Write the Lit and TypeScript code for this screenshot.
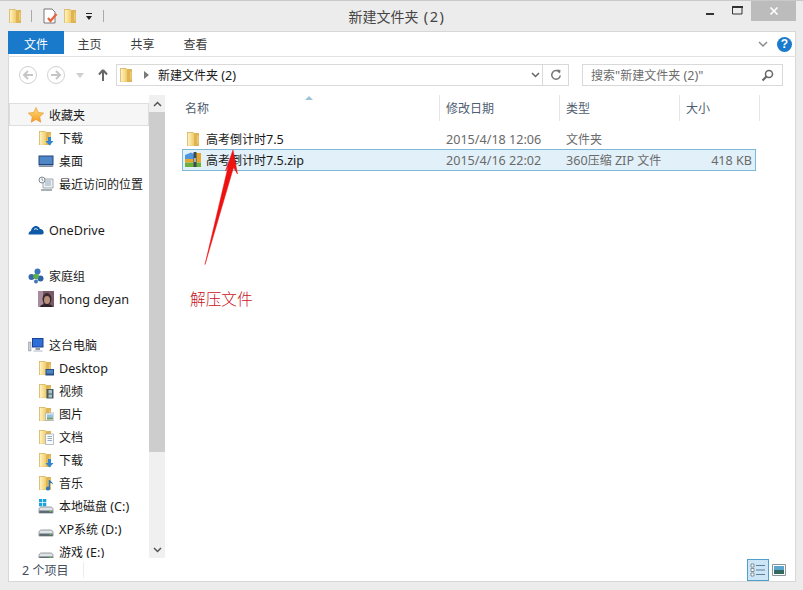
import { LitElement, html, css, svg } from "lit";
import { customElement } from "lit/decorators.js";

const t = (s: string) =>
  s.split(/([\u0020-\u007e]+)/).filter(Boolean).map((p) =>
    /^[\u0020-\u007e]+$/.test(p) ? html`<span class="l">${p}</span>` : p
  );

const folderBase = svg`
  <defs><linearGradient id="fg" x1="0" y1="0" x2="1" y2="0"><stop offset="0" stop-color="#fff3c4"/><stop offset="1" stop-color="#efcb68"/></linearGradient></defs>
  <path d="M1 1h6l1 1h5v13H1z" fill="#d8b565"/>
  <path d="M1.800 1.800h6.400v13H1.800z" fill="url(#fg)"/>
  <path d="M8.200 3l4.300-.5v11.700l-4.300.9z" fill="#e0b450"/>
  <path d="M11 4.500h1.500v8H11z" fill="#eccb78"/>`;

const overlays: Record<string, unknown> = {
  plain: svg``,
  down: svg`<path d="M10 7h3v4h2.500l-4 4.500-4-4.500H10z" fill="#2f86cf"/>`,
  desktop: svg`<path d="M7.500 9h8.500v6.500H7.500z" fill="#2b4f86"/><path d="M8.500 10h6.500v3.500H8.500z" fill="#4d86c4"/>`,
  video: svg`<path d="M8.500 6h7v9.500h-7z" fill="#4a5a60"/><path d="M10.500 7h3.500v3.500h-3.500zM10.500 11.500h3.500v3h-3.500z" fill="#a8c4c8"/>`,
  picture: svg`<path d="M7.500 7h8.500v7.500H7.500z" fill="#f2f4f6" stroke="#9aa3ad" stroke-width=".6"/><path d="M9 8.500h6v3H9z" fill="#8fc1e0"/><path d="M9 11.500h6v2H9z" fill="#6f9a6a"/>`,
  doc: svg`<path d="M7.500 5h8v10.500h-8z" fill="#fafbfc" stroke="#9aa3ad" stroke-width=".7"/><path d="M9.500 7.500h4.500M9.500 9.500h4.500M9.500 11.500h4.500" stroke="#7d98b5" stroke-width=".8"/>`,
  music: svg`<path d="M12 5v8.500a2 2 0 1 1-1.200-1.800V5z" fill="#2f77b8"/><path d="M12 5c1 2 3 2 3 4.500-1-1.300-2-1.500-3-1.500z" fill="#2f77b8"/>`,
};

const folder = (k: string) =>
  html`<svg class="ic" viewBox="0 0 16 16">${folderBase}${overlays[k]}</svg>`;

const star = html`<svg class="ic" viewBox="0 0 16 16"><defs><linearGradient id="st" x1="0" y1="0" x2="0" y2="1"><stop offset="0" stop-color="#ffe07a"/><stop offset="1" stop-color="#f59a23"/></linearGradient></defs><path d="M8 .5l2.300 5 5.400.6-4 3.700 1.100 5.400L8 12.500l-4.800 2.700 1.100-5.400-4-3.700 5.400-.6z" fill="url(#st)" stroke="#e0902a" stroke-width=".6"/></svg>`;
const desk = html`<svg class="ic" viewBox="0 0 16 16"><path d="M.5 2.500h15v10H.5z" fill="#24457c"/><path d="M1.500 3.500h13v7.500h-13z" fill="#4f86c6"/><path d="M1 13h14v1H1z" fill="#8794a3"/></svg>`;
const recent = html`<svg class="ic" viewBox="0 0 16 16"><path d="M5 3h10v9H5z" fill="#eef1f3" stroke="#8c969e" stroke-width=".8"/><path d="M7 5h6M7 7h6M7 9h6" stroke="#8aa3b8" stroke-width=".9"/><path d="M3 13h11v2H3z" fill="#a9b0b6"/><circle cx="4" cy="4" r="3" fill="#f7f7f7" stroke="#7f8a92"/><path d="M4 2.300V4l1.200.8" stroke="#5f6a72" stroke-width=".7" fill="none"/></svg>`;
const cloud = html`<svg class="ic" viewBox="0 0 16 16"><path d="M.5 12.500C.5 10 2 9 3 9c.3-3 3-5.500 5.500-5 2 .3 3 1.500 3.500 3 2.300 0 3.700 1.800 3.700 3.300 0 1.400-.8 2.200-2 2.200z" fill="#0f5aa8"/><path d="M6 7.500c1.500-1.300 3-.8 4 .5" stroke="#fff" stroke-width=".9" fill="none"/></svg>`;
const home = html`<svg class="ic" viewBox="0 0 16 16"><path d="M4 9L9 4l3 6z" stroke="#8eb7c9" fill="none"/><circle cx="9.500" cy="3.500" r="3" fill="#3d76b8"/><circle cx="3.500" cy="9" r="3" fill="#3a68ad"/><circle cx="12.500" cy="10.500" r="3" fill="#2f63a8"/><circle cx="8" cy="8.500" r="2.800" fill="#58b04a"/><circle cx="8" cy="13.500" r="2" fill="#4578b6"/></svg>`;
const avatar = html`<svg class="ic" viewBox="0 0 16 16"><rect width="16" height="16" fill="#7a5a68"/><rect width="5" height="16" fill="#a98c9e"/><ellipse cx="9" cy="8" rx="4.500" ry="6" fill="#3a2a2c"/><ellipse cx="9" cy="9" rx="3" ry="4" fill="#b78f7d"/><path d="M2 16c1-3 4-3 7-3s5 1 6 3z" fill="#2d2428"/></svg>`;
const pc = html`<svg class="ic" viewBox="0 0 16 16"><path d="M.5 5h2.500v9H.5z" fill="#c9d0d6" stroke="#7c8790" stroke-width=".5"/><path d="M4 1h11.500v9.500H4z" fill="#1d3f8f"/><path d="M5 2h9.500v7.500H5z" fill="#2f6fd8"/><path d="M7.500 11h4.500v2H7.500z" fill="#8d99a4"/><path d="M5.500 13.500h9v1h-9z" fill="#aeb7bf"/></svg>`;
const drive = (win = false) => html`<svg class="ic" viewBox="0 0 16 16">${win ? svg`<path d="M1 1h3.300v3.300H1zM5 1h3.300v3.300H5zM1 5h3.300v3.300H1zM5 5h3.300v3.300H5z" fill="#1aa3dc"/>` : svg``}<path d="M1 11.500c0-1.300 1-2.500 2.500-2.500h9c1.500 0 2.500 1.200 2.500 2.500V15H1z" fill="#dfe3e6" stroke="#6f787f" stroke-width=".7"/><path d="M1.300 12.500h13.400V15H1.300z" fill="#5f6b73"/><path d="M11.500 13h2v1h-2z" fill="#59c14a"/></svg>`;
const zip = html`<svg class="fi" viewBox="0 0 18 16"><path d="M1 3l6-2.500L10 2v5H1z" fill="#4f96dd"/><path d="M10 1h7v6h-7z" fill="#e1a72f"/><path d="M1 7h16v3.500H1z" fill="#e8a62c"/><path d="M1 10.500h16V15H1z" fill="#6eb13a"/><path d="M9.500 0h3v15h-3z" fill="#3d4a56"/><path d="M10.300 6h1.400v4h-1.400z" fill="#d8dde0"/></svg>`;

type Row = { icon?: unknown; text?: string; sub?: boolean; sel?: boolean };
const nav: Row[] = [
  { icon: star, text: "收藏夹", sel: true },
  { icon: folder("down"), text: "下载", sub: true },
  { icon: desk, text: "桌面", sub: true },
  { icon: recent, text: "最近访问的位置", sub: true },
  {},
  { icon: cloud, text: "OneDrive" },
  {},
  { icon: home, text: "家庭组" },
  { icon: avatar, text: "hong deyan", sub: true },
  {},
  { icon: pc, text: "这台电脑" },
  { icon: folder("desktop"), text: "Desktop", sub: true },
  { icon: folder("video"), text: "视频", sub: true },
  { icon: folder("picture"), text: "图片", sub: true },
  { icon: folder("doc"), text: "文档", sub: true },
  { icon: folder("down"), text: "下载", sub: true },
  { icon: folder("music"), text: "音乐", sub: true },
  { icon: drive(true), text: "本地磁盘 (C:)", sub: true },
  { icon: drive(), text: "XP系统 (D:)", sub: true },
  { icon: drive(), text: "游戏 (E:)", sub: true },
];

@customElement("app-root")
export class AppRoot extends LitElement {
  static styles = css`
    :host {
      display: block; width: 803px; height: 590px; box-sizing: border-box; overflow: hidden;
      background: #ececec; border-top: 1px solid #c9c9c9; padding: 0 7px 7px 8px;
      font: 12px "Noto Sans CJK SC", "Noto Sans", sans-serif; color: #1a1a1a; position: relative;
    }
    .l { font-family: "Noto Sans", sans-serif; font-size: 12.6px; }
    svg { display: block; flex: none; }
    .ic { width: 16px; height: 16px; }
    .fi { width: 18px; height: 16px; }
    .fq { width: 13px; height: 16px; }

    .title { height: 30px; display: grid; grid-template-columns: 1fr auto 1fr; margin: 0 -7px 0 -8px; }
    .qat { display: flex; align-items: flex-start; padding: 7px 0 0 9px; }
    .qat .sep { width: 1px; height: 12px; background: #a9a9a9; margin-top: 2px; }
    .caption { font-size: 14px; color: #444; padding-top: 5px; line-height: 20px; margin-right: 9px; }
    .caption .l { font-size: 14.5px; letter-spacing: 1.6px; }
    .win { display: flex; justify-content: flex-end; padding-right: 7px; height: 20px; }
    .win div { display: flex; align-items: center; justify-content: center; }
    .min { width: 26px; } .max { width: 28px; }
    .close { width: 45px; background: #bcbcbc; }

    .main { height: 551px; background: #fff; box-shadow: 0 0 0 1px #d7d7d7 inset; display: flex; flex-direction: column; }
    .tabs { height: 26px; flex: none; display: flex; border-bottom: 1px solid #e2e2e2; box-sizing: border-box; position: relative; padding-right: 4px; }
    .tab { height: 23px; line-height: 25px; width: 53px; text-align: center; color: #3c3c3c; }
    .tab.file { width: 56px; margin-right: -1px; background: #1979ca; color: #fff; }
    .tabs .right { margin-left: auto; display: flex; align-items: center; gap: 9px; height: 25px; padding-top: 1px; box-sizing: border-box; }
    .help { width: 15px; height: 15px; border-radius: 50%; background: #1a7acb; color: #fff; font: bold 12px/15px "Liberation Sans", sans-serif; text-align: center; }

    .addr { height: 38px; flex: none; display: flex; align-items: flex-start; padding: 7px 12px 0 11px; box-sizing: border-box; }
    .navbtns { display: flex; align-items: center; height: 22px; }
    .round { width: 18px; height: 18px; border: 1px solid #d0d0d0; border-radius: 50%; box-sizing: border-box; display: flex; align-items: center; justify-content: center; margin-right: 10px; }
    .box { border: 1px solid #d9d9d9; height: 22px; box-sizing: border-box; display: flex; align-items: center; }
    .path { width: 453px; margin-left: 8px; padding-left: 3px; gap: 8px; }
    .path .crumb { flex: 1; margin-left: 1px; }
    .cell { height: 100%; display: flex; align-items: center; justify-content: center; border-left: 1px solid #d9d9d9; }
    .search { width: 201px; margin-left: 13px; padding: 0 8px; color: #6d6d6d; justify-content: space-between; }

    .body { flex: 1; min-height: 0; display: flex; position: relative; }
    .navp { width: 141px; flex: none; padding: 8px 0 0 1px; box-sizing: border-box; overflow: hidden; }
    .nrow { height: 23px; display: flex; align-items: center; gap: 5px; padding-left: 19px; box-sizing: border-box; white-space: nowrap; }
    .nrow.sub { padding-left: 29px; }
    .nrow.sel { background: #f6f6f6; border: 1px solid #dedede; padding-left: 18px; }
    .sb { width: 16px; flex: none; background: #f0f0f0; display: flex; flex-direction: column; }
    .sb .a { height: 17px; display: flex; align-items: center; justify-content: center; flex: none; }
    .sb .thumb { height: 340px; background: #cdcdcd; flex: none; }
    .sb .g { flex: 1; }

    .files { flex: 1; padding-left: 18px; position: relative; }
    .head, .frow { display: grid; }
    .head { grid-template-columns: 257px 120px 120px 80px; height: 24px; color: #4f5e70; }
    .head div { border-right: 1px solid #e6e6e6; line-height: 26px; }
    .head div:first-child { padding-left: 2px; position: relative; }
    .head div:not(:first-child) { padding-left: 6px; }
    .sort { position: absolute; left: 122px; top: 1px; }
    .frow { grid-template-columns: 257px 120px 120px 77px; height: 21px; align-items: center; box-sizing: border-box; width: 574px; margin-left: -1px; border: 1px solid transparent; }
    .frow.first { margin-top: 9px; }
    .frow.sel { background: #e2f1f9; border-color: #7db9d6; height: 22px; }
    .frow > div:nth-child(n+2) { padding-left: 6px; color: #6a6a6a; }
    .frow > div:first-child { display: flex; align-items: center; gap: 4px; padding-left: 2px; margin-left: -1px; }
    .frow > .size { text-align: right; padding-right: 5px; }

    .arrow { position: absolute; left: 192px; top: 50px; width: 40px; height: 125px; }
    .note { position: absolute; left: 182px; top: 193px; color: #c8141a; font-size: 15.7px; font-weight: 300; line-height: 22px; }

    .status { height: 24px; flex: none; display: flex; align-items: center; padding-left: 14px; color: #444d5e; position: relative; }
    .status .sep { width: 1px; height: 16px; background: #ececec; margin-left: 14px; }
    .views { margin-left: auto; display: flex; align-items: center; gap: 3px; padding-right: 10px; }
    .vbtn { width: 22px; height: 22px; box-sizing: border-box; background: #cde6f7; border: 1px solid #4f9fcb; display: flex; align-items: center; justify-content: center; }
  `;

  render() {
    return html`
      <div class="title">
        <div class="qat">
          <svg class="fq" viewBox="1 0 13 16" style="margin-right:9px">${folderBase}</svg>
          <div class="sep" style="margin-right:10px"></div>
          <svg class="ic" viewBox="0 0 16 16" style="margin-right:6px"><path d="M2 1h8l3 3v11H2z" fill="#fff" stroke="#777"/><path d="M6 10l2.500 3 6-7" stroke="#e8623a" stroke-width="2.200" fill="none"/></svg>
          <svg class="fq" viewBox="1 0 13 16" style="margin-right:8px">${folderBase}</svg>
          <svg width="8" height="8" viewBox="0 0 8 8" style="margin:5px 10px 0 0"><path d="M1 0h6v1H1zM1 3h6L4 7z" fill="#222"/></svg>
          <div class="sep"></div>
        </div>
        <div class="caption">${t("新建文件夹 (2)")}</div>
        <div class="win">
          <div class="min"><svg width="10" height="10" viewBox="0 0 10 10"><path d="M1 7h8v2H1z" fill="#333"/></svg></div>
          <div class="max"><svg width="11" height="10" viewBox="0 0 11 10" style="margin-bottom:2px"><path d="M.5 2.500h9.500v6.500H.5z" fill="none" stroke="#333"/><path d="M0 1h11v2H0z" fill="#333"/></svg></div>
          <div class="close"><svg width="10" height="10" viewBox="0 0 10 10"><path d="M1.500 1.500l7 7M8.500 1.500l-7 7" stroke="#fff" stroke-width="1.600"/></svg></div>
        </div>
      </div>

      <div class="main">
        <div class="tabs">
          <div class="tab file">文件</div>
          <div class="tab">主页</div>
          <div class="tab">共享</div>
          <div class="tab">查看</div>
          <div class="right">
            <svg width="10" height="7" viewBox="0 0 10 7"><path d="M1 1l4 4 4-4" stroke="#8a8a8a" stroke-width="1.500" fill="none"/></svg>
            <div class="help">?</div>
          </div>
        </div>

        <div class="addr">
          <div class="navbtns">
            <div class="round"><svg width="12" height="10" viewBox="0 0 12 10"><path d="M6 1L2 5l4 4M2 5h9" stroke="#c6c6c6" stroke-width="2" fill="none"/></svg></div>
            <div class="round"><svg width="12" height="10" viewBox="0 0 12 10"><path d="M6 1l4 4-4 4M10 5H1" stroke="#c6c6c6" stroke-width="2" fill="none"/></svg></div>
            <svg width="8" height="5" viewBox="0 0 8 5" style="margin:0 14px 0 1px"><path d="M0 0h8L4 5z" fill="#cfcfcf"/></svg>
            <svg width="10" height="12" viewBox="0 0 10 12"><path d="M5 1L1 5.500M5 1l4 4.500M5 1v11" stroke="#666" stroke-width="2" fill="none"/></svg>
          </div>
          <div class="box path">
            <svg class="fq" viewBox="1 0 13 16">${folderBase}</svg>
            <svg width="5" height="8" viewBox="0 0 5 8" style="margin-left:3px"><path d="M0 0l5 4-5 4z" fill="#7a7a7a"/></svg>
            <div class="crumb">${t("新建文件夹 (2)")}</div>
            <div class="cell" style="width:13px;border-left:0"><svg width="9" height="6" viewBox="0 0 9 6"><path d="M1 1l3.500 3.500L8 1" stroke="#666" stroke-width="1.500" fill="none"/></svg></div>
            <div class="cell" style="width:25px;margin-left:-8px"><svg width="12" height="12" viewBox="0 0 12 12"><path d="M9.600 3.500A4.300 4.300 0 1 0 10.300 6.500" stroke="#777" stroke-width="1.500" fill="none"/><path d="M7 .5l3.500.5-.5 3.500z" fill="#777"/></svg></div>
          </div>
          <div class="box search">
            <span>${t('搜索"新建文件夹 (2)"')}</span>
            <svg width="13" height="13" viewBox="0 0 13 13"><circle cx="8" cy="5" r="3.500" fill="none" stroke="#666" stroke-width="1.500"/><path d="M5.500 7.500L1.500 11.500" stroke="#666" stroke-width="2.200"/></svg>
          </div>
        </div>

        <div class="body">
          <div class="navp">
            ${nav.map((r) => html`<div class="nrow ${r.sub ? "sub" : ""} ${r.sel ? "sel" : ""}">${r.icon}${r.text ? html`<span>${t(r.text)}</span>` : ""}</div>`)}
          </div>
          <div class="sb">
            <div class="a"><svg width="9" height="6" viewBox="0 0 9 6"><path d="M1 5l3.500-3.500L8 5" stroke="#555" stroke-width="1.500" fill="none"/></svg></div>
            <div class="thumb"></div>
            <div class="g"></div>
            <div class="a"><svg width="9" height="6" viewBox="0 0 9 6"><path d="M1 1l3.500 3.500L8 1" stroke="#555" stroke-width="1.500" fill="none"/></svg></div>
          </div>
          <div class="files">
            <div class="head">
              <div>名称<svg class="sort" width="8" height="4" viewBox="0 0 8 4"><path d="M0 4l4-4 4 4z" fill="#9cc3d8"/></svg></div>
              <div>修改日期</div><div>类型</div><div>大小</div>
            </div>
            <div class="frow first">
              <div><svg class="fi" viewBox="-2 0 18 16">${folderBase}</svg><span>${t("高考倒计时7.5")}</span></div>
              <div>${t("2015/4/18 12:06")}</div><div>文件夹</div><div class="size"></div>
            </div>
            <div class="frow sel">
              <div>${zip}<span>${t("高考倒计时7.5.zip")}</span></div>
              <div>${t("2015/4/16 22:02")}</div><div>${t("360压缩 ZIP 文件")}</div><div class="size">${t("418 KB")}</div>
            </div>
          </div>
          <svg class="arrow" viewBox="0 0 40 125"><path d="M5 119.500L28 22 25.500 26 33 5l4.500 24-4-6.500z" fill="#ee1111" stroke="#ee1111" stroke-width=".5"/></svg>
          <div class="note">解压文件</div>
        </div>

        <div class="status">
          <span>${t("2 个项目")}</span><div class="sep"></div>
          <div class="views">
            <div class="vbtn"><svg width="16" height="14" viewBox="0 0 16 14"><path d="M1 1h3v3H1zM1 5.500h3v3H1zM1 10h3v3H1z" fill="#fff" stroke="#6a7785" stroke-width=".8"/><path d="M6 2.500h9M6 7h9M6 11.500h9" stroke="#5f7d95" stroke-width="1.200"/></svg></div>
            <svg width="14" height="12" viewBox="0 0 14 12"><path d="M.5.500h13v11H.5z" fill="#fff" stroke="#8c959c"/><path d="M2 2h10v4H2z" fill="#5ba6cf"/><path d="M2 6h10v4H2z" fill="#33695f"/></svg>
          </div>
        </div>
      </div>
    `;
  }
}
